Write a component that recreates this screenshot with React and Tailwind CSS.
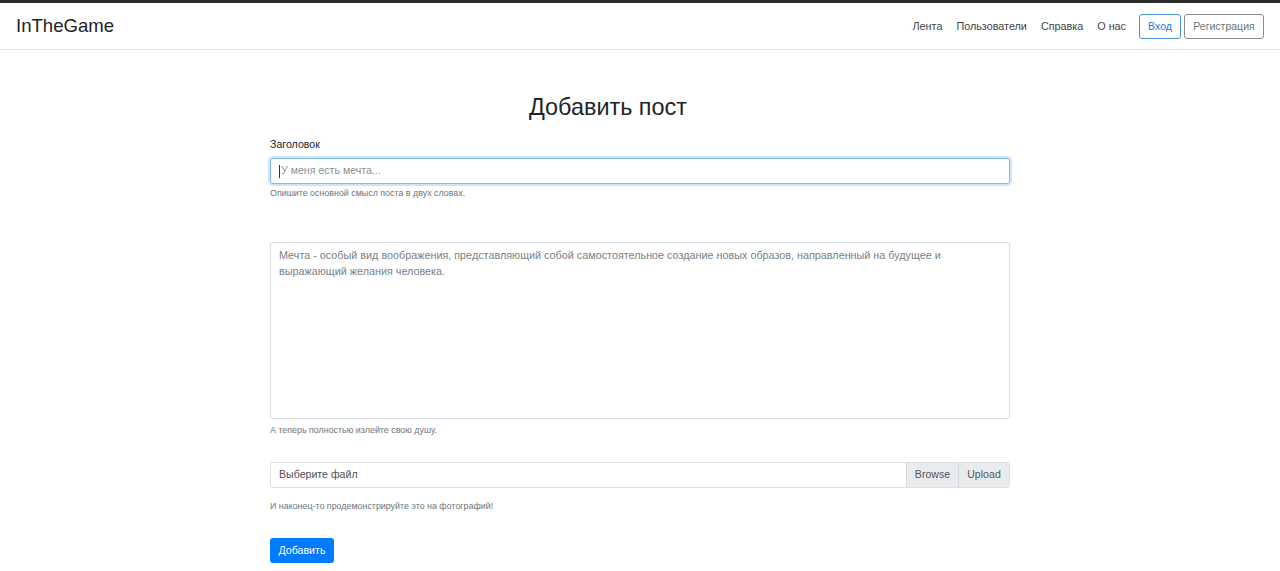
export default function App() {
  return (
    <div className="min-h-[571px] bg-white text-[#212529]">
      <div className="font-['Liberation_Sans',Arial,sans-serif]">
        <div className="h-[3px] bg-[#2b2b2b]" />
        <nav className="h-[47px] border-b border-[#e5e5e5] flex items-center justify-between pl-[16px] pr-[16px]">
          <div className="text-[18.6px] text-[#222] leading-none">InTheGame</div>
          <div className="flex items-center">
            <div className="flex items-center gap-[14px] text-[10.8px] text-[#444] mr-[13px]">
              <span>Лента</span>
              <span>Пользователи</span>
              <span>Справка</span>
              <span>О нас</span>
            </div>
            <button className="h-[25px] w-[42px] rounded-[3px] border border-[#4a90d9] text-[#1a7be0] text-[10.5px] leading-none mr-[3px]">Вход</button>
            <button className="h-[25px] w-[80px] rounded-[3px] border border-[#8a8f94] text-[#6c757d] text-[10.5px] leading-none">Регистрация</button>
          </div>
        </nav>
        <main className="w-[740px] ml-[270px] flex flex-col">
          <h1 className="mt-[42px] ml-[259px] text-[23.4px] leading-[30px] text-[#212529]">Добавить пост</h1>
          <label className="mt-[15px] text-[10.6px] leading-[14px] text-[#212529]">Заголовок</label>
          <div className="mt-[7px] h-[26px] rounded-[3px] border border-[#86b7ef] shadow-[0_0_0_2px_rgba(0,123,255,0.2)] flex items-center px-[8px] text-[10.6px] text-[#8a9096]">
            <span className="w-px h-[13px] bg-[#333] mr-[1px]" />
            <span>У меня есть мечта...</span>
          </div>
          <div className="mt-[3px] text-[8.9px] leading-[12px] text-[#6c757d]">Опишите основной смысл поста в двух словах.</div>
          <div className="mt-[43px] h-[177px] rounded-[3px] border border-[#d8dde2] px-[8px] pt-[4px] text-[10.8px] leading-[16px] text-[#7a8086]">
            Мечта - особый вид воображения, представляющий собой самостоятельное создание новых образов, направленный на будущее и выражающий желания человека.
          </div>
          <div className="mt-[5px] text-[8.9px] leading-[12px] text-[#6c757d]">А теперь полностью излейте свою душу.</div>
          <div className="mt-[26px] h-[26px] rounded-[3px] border border-[#dde1e5] flex text-[10.6px]">
            <div className="flex-1 flex items-center px-[8px] text-[#495057]">Выберите файл</div>
            <div className="w-[52px] flex items-center justify-center bg-[#e9ecef] border-l border-[#d6dade] text-[#555]">Browse</div>
            <div className="w-[51px] flex items-center justify-center bg-[#e9ecef] border-l border-[#d6dade] text-[#555] rounded-r-[3px]">Upload</div>
          </div>
          <div className="mt-[12px] text-[8.9px] leading-[12px] text-[#6c757d]">И наконец-то продемонстрируйте это на фотографий!</div>
          <button className="mt-[26px] self-start w-[64px] h-[25px] rounded-[3px] bg-[#007bff] text-white text-[10.6px] leading-none">Добавить</button>
        </main>
      </div>
    </div>
  );
}
